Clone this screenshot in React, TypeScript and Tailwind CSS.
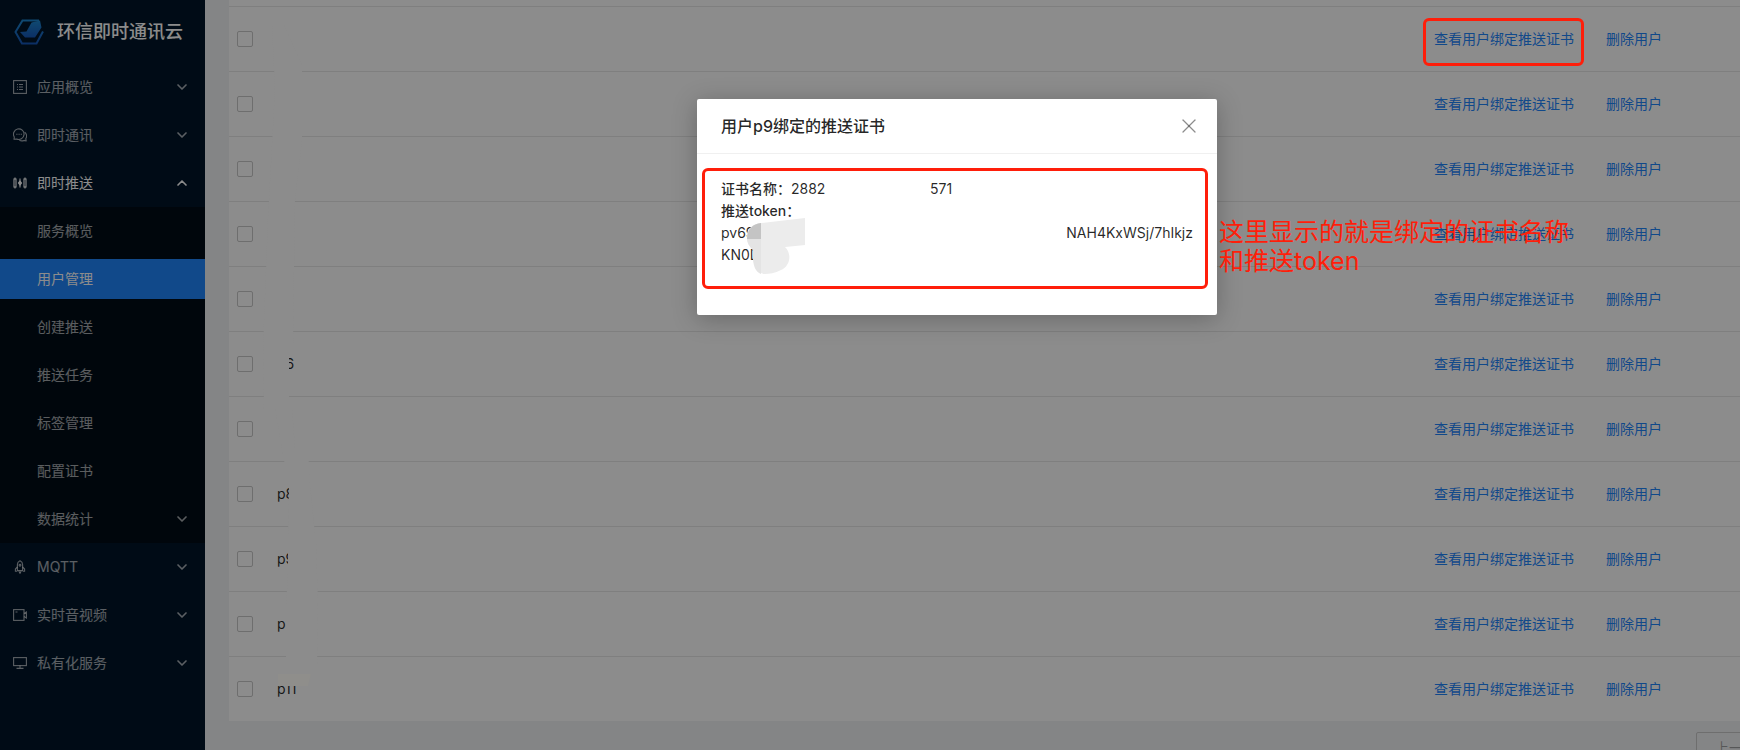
import type { ReactNode } from 'react'
import { ChevronDown, ChevronUp, X } from 'lucide-react'

type Item = { label: string; icon?: ReactNode; open?: boolean; arrow?: boolean; active?: boolean }

const svgProps = {
  width: 14,
  height: 14,
  viewBox: '0 0 14 14',
  fill: 'none',
  stroke: 'currentColor',
  strokeWidth: 1.1,
}

const topItems: Item[] = [
  {
    label: '应用概览',
    arrow: true,
    icon: (
      <svg {...svgProps}>
        <rect x="0.6" y="0.6" width="12.8" height="12.8" />
        <path d="M4 4.5h1M6 4.5h4M4 7h1M6 7h4M4 9.5h1M6 9.5h4" />
      </svg>
    ),
  },
  {
    label: '即时通讯',
    arrow: true,
    icon: (
      <svg {...svgProps}>
        <path d="M1 11.2 1.3 9A5.3 5.3 0 1 1 3.6 11Z" strokeLinejoin="round" />
        <path d="M11.6 4.2A4.6 4.6 0 0 1 12.8 10.6L13.2 13 11 12.4A5 5 0 0 1 6.4 12.2" strokeLinejoin="round" />
        <path d="M3.3 6.2h1.2M5.5 6.2h1.2M7.7 6.2h1.2" />
      </svg>
    ),
  },
  {
    label: '即时推送',
    arrow: true,
    open: true,
    icon: (
      <svg {...svgProps}>
        <rect x="1" y="3" width="2" height="8" />
        <rect x="11" y="3" width="2" height="8" />
        <path d="M7 5 8.5 7 7 9 5.5 7Z" fill="currentColor" />
        <path d="M2 1.5V3M2 11v1.5M12 1.5V3M12 11v1.5M7 2.5v9" />
      </svg>
    ),
  },
]

const subItems: Item[] = [
  { label: '服务概览' },
  { label: '用户管理', active: true },
  { label: '创建推送' },
  { label: '推送任务' },
  { label: '标签管理' },
  { label: '配置证书' },
  { label: '数据统计', arrow: true },
]

const bottomItems: Item[] = [
  {
    label: 'MQTT',
    arrow: true,
    icon: (
      <svg {...svgProps}>
        <path d="M4.4 10.5V4.5C4.4 2.6 5.5 1.4 7 .7c1.5.7 2.6 1.9 2.6 3.8v6Z" />
        <path d="M4.4 7 2.4 9v2.2h2M9.6 7l2 2v2.2h-2M5.8 11 7 13.3 8.2 11" />
        <circle cx="7" cy="5.2" r="0.9" />
      </svg>
    ),
  },
  {
    label: '实时音视频',
    arrow: true,
    icon: (
      <svg {...svgProps}>
        <rect x="0.6" y="1.6" width="10.4" height="10.8" />
        <path d="M11 5.5 13.4 4v6L11 8.5M2.5 4h2" />
      </svg>
    ),
  },
  {
    label: '私有化服务',
    arrow: true,
    icon: (
      <svg {...svgProps}>
        <rect x="0.6" y="1.6" width="12.8" height="8" />
        <path d="M7 9.6v2.8M3.5 12.4h7" />
      </svg>
    ),
  },
]

const users = ['', '', '', '', '', 'p6', '', 'p8', 'p9', 'p', 'p11']

function MenuItem({ item }: { item: Item }) {
  const tone = item.active ? 'bg-[#1f85fb] text-white' : item.open ? 'text-white' : 'text-white/65'
  const Arrow = item.open ? ChevronUp : ChevronDown
  return (
    <li className="py-1">
      <button type="button" className={`flex h-10 w-full items-center pl-[13px] pr-[15px] text-left ${tone}`}>
        <span className="w-6">{item.icon}</span>
        <span className="flex-1">{item.label}</span>
        {item.arrow && <Arrow size={16} strokeWidth={2.5} />}
      </button>
    </li>
  )
}

function Sidebar() {
  return (
    <aside className="w-[205px] shrink-0 bg-[#001529]">
      <div className="flex h-[63px] items-center gap-3 pl-[13px]">
        <svg width="32" height="28" viewBox="0 0 32 28">
          <defs>
            <linearGradient id="logo" x1="0" y1="0" x2="0" y2="1">
              <stop offset="0" stopColor="#1d86cf" />
              <stop offset="1" stopColor="#1557b8" />
            </linearGradient>
          </defs>
          <path
            d="M26 2.5H9.5L2.5 14 9 25.5h14.5L30 13.5"
            fill="none"
            stroke="url(#logo)"
            strokeWidth="2"
          />
          <path d="M18.5 4.5 27 2.5l1.5 7L22 19.5H12L7 14l6.5-.5Z" fill="url(#logo)" />
        </svg>
        <span className="text-lg font-medium text-white">环信即时通讯云</span>
      </div>
      <ul>
        {topItems.map(i => <MenuItem key={i.label} item={i} />)}
      </ul>
      <ul className="bg-[#000c17]">
        {subItems.map(i => <MenuItem key={i.label} item={i} />)}
      </ul>
      <ul>
        {bottomItems.map(i => <MenuItem key={i.label} item={i} />)}
      </ul>
    </aside>
  )
}

function UserTable() {
  return (
    <table className="w-full border-collapse bg-white text-black/85">
      <tbody>
        <tr className="h-[6px] border-b border-[#e8e8e8]">
          <td colSpan={4} />
        </tr>
        {users.map((name, i) => (
          <tr key={i} className="h-[65px] border-b border-[#e8e8e8] last:border-b-0">
            <td className="w-12 pl-2">
              <input
                type="checkbox"
                aria-label={`选择用户 ${name || i + 1}`}
                className="block size-4 appearance-none rounded-xs border border-[#c8c8c8] bg-white"
              />
            </td>
            <td>{name}</td>
            <td className="w-[172px]">
              <a href="#cert" className="text-[#1f85fb]">查看用户绑定推送证书</a>
            </td>
            <td className="w-[134px]">
              <a href="#delete" className="text-[#1f85fb]">删除用户</a>
            </td>
          </tr>
        ))}
      </tbody>
    </table>
  )
}

// hides the user names in the table
function NameCover() {
  return (
    <svg className="absolute left-[260px] top-0" width="64" height="722" viewBox="260 0 64 722" fill="#8c8c8c">
      <path d="M272 25h12l18 40v75l-7 60-1 70-1 75h-4v64h3l3 40h13l2 35 6 60 2 60-1 60h-31v-60l2-30v-35l1-50-6-35-8-45H264l-1-60 5-130 7-130Z" />
      <path d="M278 674h33l-3 12h-30Z" fill="#8f8e8b" />
    </svg>
  )
}

function CertModal() {
  return (
    <div
      role="dialog"
      aria-labelledby="cert-title"
      className="relative mx-auto mt-[99px] w-[520px] rounded-xs bg-white text-black/85 shadow-[0_4px_24px_rgba(0,0,0,0.25)]"
    >
      <div className="flex h-[55px] items-center justify-between border-b border-[#f0f0f0] px-6">
        <h2 id="cert-title" className="text-base font-medium">用户p9绑定的推送证书</h2>
        <button type="button" aria-label="关闭" className="-mr-2 text-black/45">
          <X size={24} strokeWidth={1.25} />
        </button>
      </div>
      <div className="px-6 pb-[49px] pt-6">
        <div className="flex">
          <strong className="font-medium">证书名称：</strong>
          <span className="w-[139px]">2882</span>
          <span>571</span>
        </div>
        <div><strong className="font-medium">推送token：</strong></div>
        <div className="flex justify-between">
          <span>pv69</span>
          <span>NAH4KxWSj/7hIkjz</span>
        </div>
        <div>KN0D</div>
      </div>
      <svg className="absolute left-[50px] top-[119px]" width="60" height="58" viewBox="0 0 60 58">
        <path d="M0 16C1 10 6 6 14 5L58 0v27l-20 2c8 8 4 20-4 23-6 3-12 4-16 4C10 56 5 46 6 32 2 28 0 24 0 16Z" fill="#ececec" />
        <path d="M0 21h14v35C8 54 5 46 6 32 2 28 0 25 0 21Z" fill="#e4e4e4" />
        <path d="M0 21C0 11 6 6 14 5v16Z" fill="#c4c4c4" />
      </svg>
      <div className="absolute left-[5px] top-[69px] h-[121px] w-[506px] rounded-md border-3 border-[#ff1e0a]" />
    </div>
  )
}

export default function App() {
  return (
    <div className="relative flex h-screen overflow-hidden bg-[#f0f2f5] font-['Inter','Noto_Sans_CJK_SC',sans-serif] text-sm leading-[22px]">
      <Sidebar />
      <main className="min-w-0 flex-1 pl-6">
        <UserTable />
        <div className="mt-[11px] flex justify-end">
          <button type="button" className="-mr-9 h-8 w-20 shrink-0 rounded-xs border border-[#c8c8c8] text-black/35">
            上一页
          </button>
        </div>
      </main>

      <div className="absolute inset-0 bg-black/45" />
      <NameCover />
      <div className="absolute inset-0 pl-[174px]">
        <CertModal />
      </div>
      <div className="absolute right-[156px] top-[18px] h-12 w-[161px] rounded-md border-3 border-[#ff1e0a]" />
      <p className="absolute right-[167px] top-[218px] w-[354px] text-[25px] leading-[29px] text-[#ff1e0a]">
        这里显示的就是绑定的证书名称和推送token
      </p>
    </div>
  )
}
